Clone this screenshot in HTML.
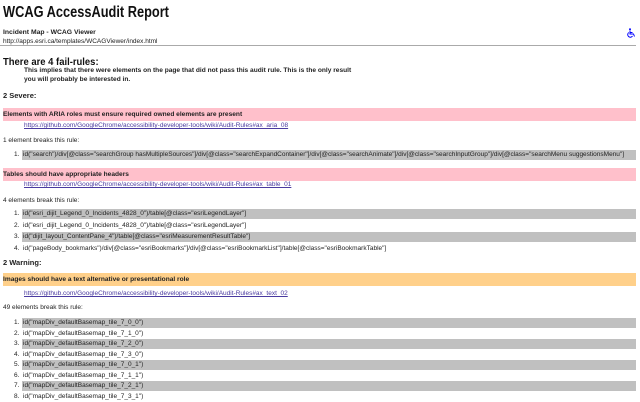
<!DOCTYPE html>
<html><head><meta charset="utf-8"><style>
body{margin:0;width:640px;height:400px;overflow:hidden;background:#fff;font-family:"Liberation Sans",sans-serif;color:#222;position:relative}
.a{position:absolute;white-space:nowrap;line-height:10px;font-size:6.5px}
.bar{position:absolute;left:3px;width:633px}
.g{position:absolute;left:22px;width:614px;height:10px;background:#c0c0c0}
.lnk{color:#4a3aa0;text-decoration:underline;left:24px}
b{font-weight:bold}
</style></head><body>
<div class="a" style="top:3px;left:3px;font-size:16px;line-height:20px;font-weight:bold;color:#111;transform:scaleX(0.8);transform-origin:0 0">WCAG AccessAudit Report</div>
<div class="a" style="top:28px;left:3px;font-weight:bold;font-size:6.8px">Incident Map - WCAG Viewer</div>
<div class="a" style="top:37px;left:3px">http://apps.esri.ca/templates/WCAGViewer/index.html</div>
<svg style="position:absolute;left:627px;top:28px" width="9" height="10" viewBox="0 0 9 10"><circle cx="3" cy="1.2" r="1" fill="#00f"/><path d="M3 2.5V6H6.5L7.5 8.5M3 4.5H5.5M1.8 4.5A2.6 2.6 0 1 0 5.5 8" stroke="#00f" stroke-width="1" fill="none"/></svg>
<div style="position:absolute;top:45px;left:0;width:636px;height:1px;background:#aaa"></div>
<div class="a" style="top:55px;left:3px;font-size:10.5px;line-height:14px;font-weight:bold;color:#111;transform:scaleX(0.9);transform-origin:0 0">There are 4 fail-rules:</div>
<div class="a" style="top:66px;left:24px;font-weight:bold;font-size:6.6px">This implies that there were elements on the page that did not pass this audit rule. This is the only result</div>
<div class="a" style="top:75px;left:24px;font-weight:bold;font-size:6.6px">you will probably be interested in.</div>
<div class="a" style="top:91px;left:3px;font-weight:bold;font-size:7.5px">2 Severe:</div>

<div class="bar" style="top:108px;height:13px;background:#ffc0cb"></div>
<div class="a" style="top:110px;left:3px;font-weight:bold;font-size:6.6px">Elements with ARIA roles must ensure required owned elements are present</div>
<div class="a lnk" style="top:121px">https://github.com/GoogleChrome/accessibility-developer-tools/wiki/Audit-Rules#ax_aria_08</div>
<div class="a" style="top:136px;left:3px">1 element breaks this rule:</div>
<div class="g" style="top:150px"></div>
<div class="a" style="top:150px;left:14px">1.&nbsp; id("search")/div[@class="searchGroup hasMultipleSources"]/div[@class="searchExpandContainer"]/div[@class="searchAnimate"]/div[@class="searchInputGroup"]/div[@class="searchMenu suggestionsMenu"]</div>

<div class="bar" style="top:168px;height:13px;background:#ffc0cb"></div>
<div class="a" style="top:170px;left:3px;font-weight:bold;font-size:6.6px">Tables should have appropriate headers</div>
<div class="a lnk" style="top:180px">https://github.com/GoogleChrome/accessibility-developer-tools/wiki/Audit-Rules#ax_table_01</div>
<div class="a" style="top:196px;left:3px">4 elements break this rule:</div>
<div class="g" style="top:209px"></div>
<div class="a" style="top:209px;left:14px">1.&nbsp; id("esri_dijit_Legend_0_Incidents_4828_0")/table[@class="esriLegendLayer"]</div>
<div class="a" style="top:221px;left:14px">2.&nbsp; id("esri_dijit_Legend_0_Incidents_4828_0")/table[@class="esriLegendLayer"]</div>
<div class="g" style="top:232px"></div>
<div class="a" style="top:232px;left:14px">3.&nbsp; id("dijit_layout_ContentPane_4")/table[@class="esriMeasurementResultTable"]</div>
<div class="a" style="top:244px;left:14px">4.&nbsp; id("pageBody_bookmarks")/div[@class="esriBookmarks"]/div[@class="esriBookmarkList"]/table[@class="esriBookmarkTable"]</div>
<div class="a" style="top:258px;left:3px;font-weight:bold;font-size:7.5px">2 Warning:</div>

<div class="bar" style="top:273px;height:13px;background:#ffd08a"></div>
<div class="a" style="top:275px;left:3px;font-weight:bold;font-size:6.6px">Images should have a text alternative or presentational role</div>
<div class="a lnk" style="top:289px">https://github.com/GoogleChrome/accessibility-developer-tools/wiki/Audit-Rules#ax_text_02</div>
<div class="a" style="top:303px;left:3px">49 elements break this rule:</div>
<div class="g" style="top:318px"></div>
<div class="a" style="top:318px;left:14px">1.&nbsp; id("mapDiv_defaultBasemap_tile_7_0_0")</div>
<div class="a" style="top:329px;left:14px">2.&nbsp; id("mapDiv_defaultBasemap_tile_7_1_0")</div>
<div class="g" style="top:339px"></div>
<div class="a" style="top:339px;left:14px">3.&nbsp; id("mapDiv_defaultBasemap_tile_7_2_0")</div>
<div class="a" style="top:350px;left:14px">4.&nbsp; id("mapDiv_defaultBasemap_tile_7_3_0")</div>
<div class="g" style="top:360px"></div>
<div class="a" style="top:360px;left:14px">5.&nbsp; id("mapDiv_defaultBasemap_tile_7_0_1")</div>
<div class="a" style="top:371px;left:14px">6.&nbsp; id("mapDiv_defaultBasemap_tile_7_1_1")</div>
<div class="g" style="top:381px"></div>
<div class="a" style="top:381px;left:14px">7.&nbsp; id("mapDiv_defaultBasemap_tile_7_2_1")</div>
<div class="a" style="top:392px;left:14px">8.&nbsp; id("mapDiv_defaultBasemap_tile_7_3_1")</div>
</body></html>
